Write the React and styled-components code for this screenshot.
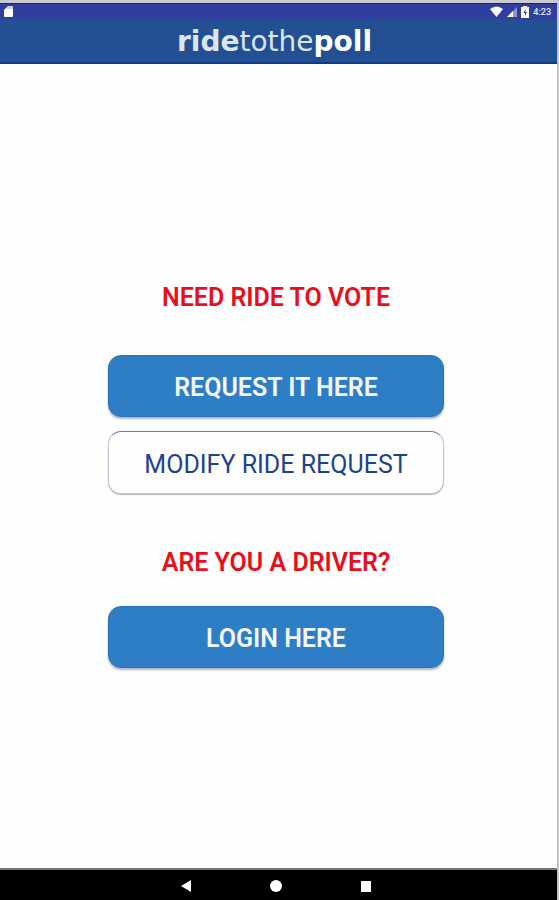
import React from "react";
import styled, { createGlobalStyle } from "styled-components";

const GlobalStyle = createGlobalStyle`
  *, *::before, *::after { box-sizing: border-box; }
  body { margin: 0; background: #fff; }
  button { font: inherit; cursor: pointer; }
`;

const Screen = styled.div`
  display: flex;
  flex-direction: column;
  min-height: 100vh;
  border-top: 3px solid #cbcbcf;
  border-right: 2px solid #c4c4c6;
  background: #fefefe;
  font-family: Roboto, "Liberation Sans", sans-serif;
`;

const StatusBar = styled.div`
  display: flex;
  align-items: center;
  justify-content: space-between;
  height: 16px;
  padding: 0 6px 0 3px;
  border-top: 1px solid #0c2483;
  background: #303f9f;
  color: #e8eaf8;
`;

const StatusIcons = styled.div`
  display: flex;
  align-items: center;
  gap: 4px;
`;

const Clock = styled.time`
  font-size: 9px;
  line-height: 12px;
  font-weight: 500;
`;

const AppBar = styled.header`
  display: flex;
  align-items: center;
  justify-content: center;
  height: 45px;
  padding: 2px 8px 0 0;
  border-bottom: 2px solid #0d3c8a;
  background: #234f93;
`;

const Brand = styled.h1`
  margin: 0;
  font-family: "DejaVu Sans", sans-serif;
  font-size: 28px;
  line-height: 32px;
  font-weight: 400;
  color: #dbe6f5;
`;

const BrandPart = styled.span`
  font-weight: 700;
  color: ${(p) => (p.$bright ? "#fff" : "#dbe6f5")};
`;

const Content = styled.main`
  flex: 1;
  display: flex;
  flex-direction: column;
  align-items: center;
  justify-content: center;
  padding: 17px 5px 0 0;
`;

const Group = styled.section`
  display: flex;
  flex-direction: column;
  align-items: center;
  width: 61%;
  margin-bottom: ${(p) => (p.$last ? "0" : "52px")};
`;

const Prompt = styled.h2`
  margin: 0;
  padding: 1px 0 ${(p) => p.$space};
  font-size: 25px;
  line-height: 32px;
  font-weight: 600;
  color: #e80f1c;
  white-space: nowrap;
`;

const ActionButton = styled.button`
  width: 100%;
  height: 62px;
  padding: 4px 0 0;
  border: 1px solid #2874ba;
  border-radius: 13px;
  background: #2e7ec6;
  box-shadow: 0 2px 2px rgba(40, 50, 70, 0.35);
  && {
    font-size: 25px;
    line-height: 32px;
    font-weight: 600;
  }
  color: #f4f9ff;
  white-space: nowrap;
`;

const OutlineButton = styled(ActionButton)`
  height: 63px;
  margin-top: 14px;
  border-color: #5f83b8 #bfc3d2 #c6c8ce;
  background: #fefefe;
  box-shadow: 0 1px 1px rgba(40, 50, 70, 0.35);
  color: #1d4290;
  && {
    font-weight: 400;
  }
`;

const NavBar = styled.nav`
  display: flex;
  align-items: center;
  justify-content: center;
  gap: 58px;
  height: 32px;
  padding: 2px 5px 0 0;
  border-top: 2px solid #777;
  background: #000;
`;

const NavButton = styled.button`
  display: grid;
  place-items: center;
  width: 32px;
  height: 28px;
  padding: 0;
  border: 0;
  background: none;
  color: #fff;
`;

const SdCard = () => (
  <svg width="12" height="13" viewBox="0 0 12 13" aria-hidden="true">
    <path d="M1 5 5 1h4q1 0 1 1v9q0 1-1 1H2q-1 0-1-1z" fill="#fff" />
    <path d="M5 1v3M7 1v3M9 1v3" stroke="#9aa2d2" strokeWidth="1" />
  </svg>
);

const Wifi = () => (
  <svg width="13" height="11" viewBox="0 0 13 11" aria-hidden="true">
    <path d="M0 3Q6.500-2 13 3L6.500 11z" fill="#fff" />
  </svg>
);

const Signal = () => (
  <svg width="10" height="11" viewBox="0 0 10 11" aria-hidden="true">
    <path d="M10 1v10H0z" fill="#8e96cc" />
    <path d="M6 5v6H0z" fill="#fff" />
  </svg>
);

const Battery = () => (
  <svg width="8" height="12" viewBox="0 0 8 12" aria-hidden="true">
    <path d="M2 0h4v1h2v11H0V1h2z" fill="#fff" />
    <path d="M4.500 3 2.500 7H4v3l2-4H4.500z" fill="#303f9f" />
  </svg>
);

export default function App() {
  return (
    <>
      <GlobalStyle />
      <Screen>
        <StatusBar>
          <SdCard />
          <StatusIcons>
            <Wifi />
            <Signal />
            <Battery />
            <Clock>4:23</Clock>
          </StatusIcons>
        </StatusBar>
        <AppBar>
          <Brand>
            <BrandPart>ride</BrandPart>tothe<BrandPart $bright>poll</BrandPart>
          </Brand>
        </AppBar>
        <Content>
          <Group>
            <Prompt $space="41px">NEED RIDE TO VOTE</Prompt>
            <ActionButton type="button">REQUEST IT HERE</ActionButton>
            <OutlineButton type="button">MODIFY RIDE REQUEST</OutlineButton>
          </Group>
          <Group $last>
            <Prompt $space="27px">ARE YOU A DRIVER?</Prompt>
            <ActionButton type="button">LOGIN HERE</ActionButton>
          </Group>
        </Content>
        <NavBar>
          <NavButton type="button" aria-label="Back">
            <svg width="12" height="12" viewBox="0 0 12 12" aria-hidden="true">
              <path d="M11 0v12L1 6z" fill="currentColor" />
            </svg>
          </NavButton>
          <NavButton type="button" aria-label="Home">
            <svg width="12" height="12" viewBox="0 0 12 12" aria-hidden="true">
              <circle cx="6" cy="6" r="6" fill="currentColor" />
            </svg>
          </NavButton>
          <NavButton type="button" aria-label="Recent apps">
            <svg width="12" height="12" viewBox="0 0 12 12" aria-hidden="true">
              <path d="M1 1h10v11H1z" fill="currentColor" />
            </svg>
          </NavButton>
        </NavBar>
      </Screen>
    </>
  );
}
